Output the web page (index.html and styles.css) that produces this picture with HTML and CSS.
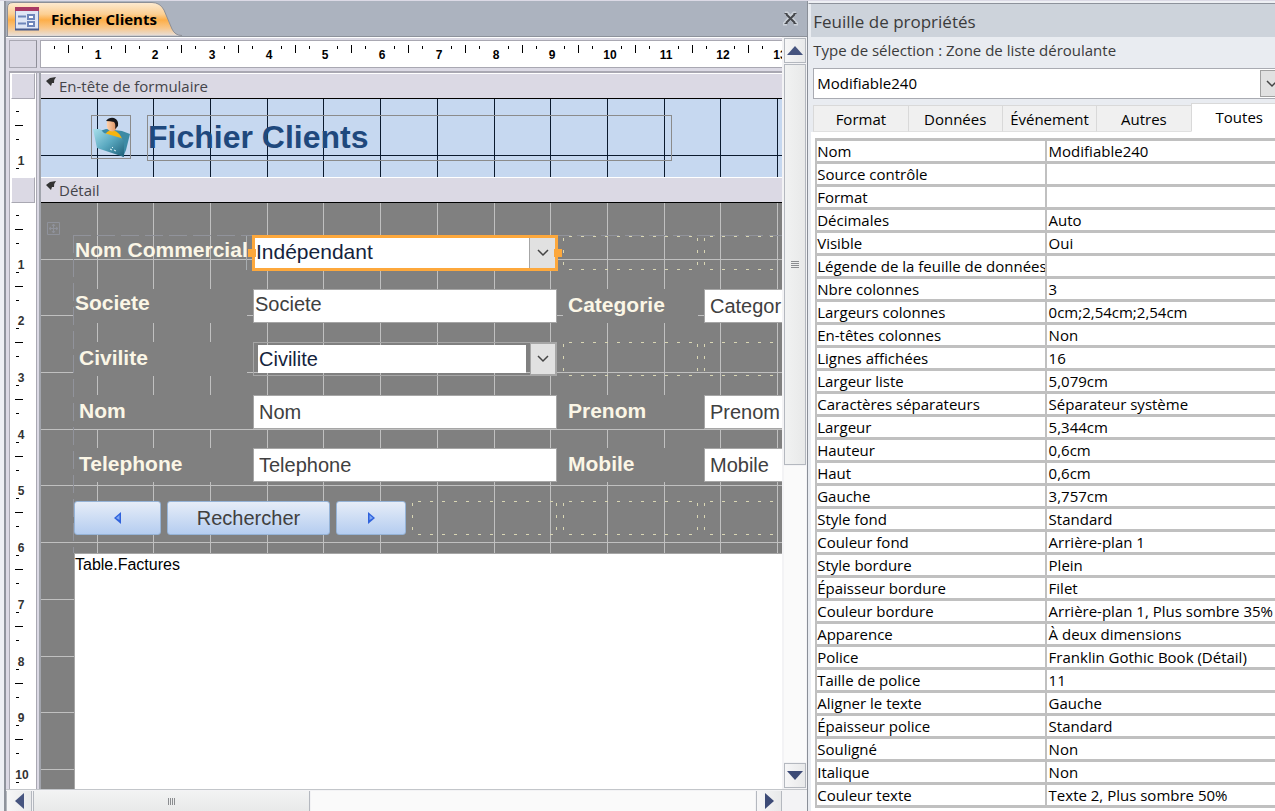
FILE: index.html
```html
<!DOCTYPE html>
<html lang="fr">
<head>
<meta charset="utf-8">
<title>Fichier Clients</title>
<link rel="stylesheet" href="styles.css">
</head>
<body>
<div class="app">
  <main class="doc">
    <div class="tabbar">
      <div class="doc-tab">
        <svg class="tab-shape" width="178" height="34" viewBox="0 0 178 34" aria-hidden="true">
          <defs><linearGradient id="tabfill" x1="0" y1="0" x2="0" y2="1">
            <stop offset="0" stop-color="#fdebd3"/><stop offset=".35" stop-color="#fccf92"/>
            <stop offset=".52" stop-color="#fdae48"/><stop offset=".75" stop-color="#f9c585"/><stop offset="1" stop-color="#e6dfdc"/>
          </linearGradient></defs>
          <path d="M.5 34V6Q.5.5 6 .5H145Q153 .5 157 8L165 27Q168 33.500 175 33.500" fill="url(#tabfill)" stroke="#8d8f96"/>
        </svg>
        <svg class="tab-icon" width="24" height="24" viewBox="0 0 24 24" aria-hidden="true">
          <rect x=".5" y=".5" width="23" height="22" fill="#dfe6f5" stroke="#6b7fae"/>
          <path d="M0 22.500H24" stroke="#475c90" stroke-width="2"/>
          <rect width="24" height="4" fill="#a93a64"/>
          <path d="M3 9.500h8M3 16.500h8" stroke="#6e86ba" stroke-width="2"/>
          <rect x="13" y="8" width="6" height="4" fill="#fff" stroke="#6e86ba" stroke-width="2"/>
          <rect x="13" y="15" width="6" height="4" fill="#fff" stroke="#6e86ba" stroke-width="2"/>
        </svg>
        <span class="tab-name">Fichier Clients</span>
      </div>
      <button class="close" aria-label="Fermer">
        <svg width="15" height="15" viewBox="0 0 15 15"><path d="M2 2.500h2l9 10h-2M13 2.500h-2l-9 10h2" fill="none" stroke="#ccd2da" stroke-width="4"/><path d="M3 3l9 9M12 3l-9 9" stroke="#45474c" stroke-width="2"/><path d="M1.500 2.500h3M10.500 2.500h3M1.500 12.500h3M10.500 12.500h3" stroke="#45474c"/></svg>
      </button>
    </div>

    <div class="workspace">
      <div class="designer">
        <div class="ruler-row">
          <div class="corner"></div>
          <div class="hruler">
            <svg class="ruler-svg" width="800" height="26" aria-hidden="true">
              <path class="tick" d="M13.500 5v3M41.500 5v3M70.500 5v3M98.500 5v3M126.500 5v3M154.500 5v3M183.500 5v3M211.500 5v3M240.500 5v3M268.500 5v3M296.500 5v3M324.500 5v3M353.500 5v3M381.500 5v3M410.500 5v3M438.500 5v3M467.500 5v3M495.500 5v3M523.500 5v3M551.500 5v3M580.500 5v3M608.500 5v3M637.500 5v3M665.500 5v3M693.500 5v3M721.500 5v3"/>
              <path class="tick" d="M27.500 4v8M84.500 4v8M140.500 4v8M197.500 4v8M254.500 4v8M310.500 4v8M367.500 4v8M424.500 4v8M481.500 4v8M537.500 4v8M594.500 4v8M651.500 4v8M707.500 4v8"/>
              <g class="num" text-anchor="middle">
                <text x="57" y="18">1</text><text x="114" y="18">2</text><text x="171" y="18">3</text><text x="228" y="18">4</text><text x="284" y="18">5</text><text x="341" y="18">6</text><text x="398" y="18">7</text><text x="455" y="18">8</text><text x="511" y="18">9</text><text x="569" y="18">10</text><text x="625" y="18">11</text><text x="682" y="18">12</text><text x="739" y="18">13</text>
              </g>
            </svg>
          </div>
        </div>

        <section class="section">
          <div class="gutter"><div class="selector"></div>
            <div class="vruler"><svg class="ruler-svg" width="26" height="74" aria-hidden="true">
              <path class="tick" d="M6 12.500h3M6 40.500h3M6 69.500h3M5 26.500h8"/>
              <g class="num vnum" text-anchor="middle"><text x="11" y="66">1</text></g>
            </svg></div>
          </div>
          <div class="band">
            <h2 class="band-title"><svg width="10" height="10" viewBox="0 0 10 10" aria-hidden="true"><path d="M0 4L4 1L10 0Q8 2 8 6L6 6L5 9Z" fill="#333"/></svg>En-tête de formulaire</h2>
            <div class="canvas head-canvas">
              <svg class="gridlines" width="100%" height="100%" aria-hidden="true"><path d="M56.500 0v900M112.500 0v900M169.500 0v900M226.500 0v900M282.500 0v900M339.500 0v900M396.500 0v900M453.500 0v900M509.500 0v900M566.500 0v900M623.500 0v900M679.500 0v900M736.500 0v900M0 56.500h1200"/></svg>
              <div class="logo-box">
                <svg width="38" height="42" viewBox="0 0 38 42" aria-hidden="true">
                  <defs>
                    <linearGradient id="fold" x1="0" y1="0" x2="1" y2="1"><stop offset="0" stop-color="#a9e0ec"/><stop offset=".5" stop-color="#5aa9c0"/><stop offset="1" stop-color="#1c5e78"/></linearGradient>
                    <linearGradient id="face" x1="0" y1="0" x2="1" y2="0"><stop offset="0" stop-color="#ffd2ac"/><stop offset="1" stop-color="#d98b5c"/></linearGradient>
                  </defs>
                  <path d="M8 15L14 13L30 15L38 18L34 34L31 41Z" fill="#3c8aa5"/>
                  <path d="M12 20Q15 14 21 14Q29 17 30 24Z" fill="#f6b40f"/>
                  <path d="M15 5Q14 13 18 15Q24 17 25 10V5Z" fill="url(#face)"/>
                  <path d="M14 5Q17 1 22 2Q27 4 26 10L23 13Q24 8 22 6Q18 5 14 5Z" fill="#16161a"/>
                  <path d="M1 13H8L12 17L29 22Q33 24 32 28L32 41L5 32Z" fill="url(#fold)"/>
                  <path d="M18 33l2 1M22 34l2 1M20 31l1 1" stroke="#dff4f8"/>
                </svg>
              </div>
              <h1 class="form-title">Fichier Clients</h1>
            </div>
          </div>
        </section>

        <section class="section grow">
          <div class="gutter"><div class="selector"></div>
            <div class="vruler"><svg class="ruler-svg" width="26" height="620" aria-hidden="true">
              <path class="tick" d="M6 12.500h3M6 40.500h3M6 69.500h3M6 97.500h3M6 125.500h3M6 153.500h3M6 182.500h3M6 210.500h3M6 239.500h3M6 267.500h3M6 295.500h3M6 323.500h3M6 352.500h3M6 380.500h3M6 409.500h3M6 437.500h3M6 466.500h3M6 494.500h3M6 522.500h3M6 550.500h3M6 579.500h3"/>
              <path class="tick" d="M5 26.500h8M5 83.500h8M5 139.500h8M5 196.500h8M5 253.500h8M5 309.500h8M5 366.500h8M5 423.500h8M5 480.500h8M5 536.500h8"/>
              <g class="num vnum" text-anchor="middle"><text x="11" y="66">1</text><text x="11" y="122">2</text><text x="11" y="179">3</text><text x="11" y="236">4</text><text x="11" y="292">5</text><text x="11" y="349">6</text><text x="11" y="406">7</text><text x="11" y="463">8</text><text x="11" y="519">9</text><text x="12" y="576">10</text></g>
            </svg></div>
          </div>
          <div class="band">
            <h2 class="band-title"><svg width="10" height="10" viewBox="0 0 10 10" aria-hidden="true"><path d="M0 4L4 1L10 0Q8 2 8 6L6 6L5 9Z" fill="#333"/></svg>Détail</h2>
            <div class="canvas detail-canvas">
              <svg class="gridlines" width="100%" height="100%" aria-hidden="true"><path d="M56.500 0v900M112.500 0v900M169.500 0v900M226.500 0v900M282.500 0v900M339.500 0v900M396.500 0v900M453.500 0v900M509.500 0v900M566.500 0v900M623.500 0v900M679.500 0v900M736.500 0v900M0 56.500h1200M0 112.500h1200M0 169.500h1200M0 226.500h1200M0 282.500h1200M0 339.500h1200M0 396.500h1200M0 453.500h1200M0 509.500h1200M0 566.500h1200"/></svg>
              <svg class="move" width="13" height="13" viewBox="0 0 13 13" aria-hidden="true"><path d="M.5.5h12v12H.5ZM6.500 2v9M2 6.500h9M5 4l1.500-2L8 4M5 9l1.500 2L8 9M4 5L2 6.500L4 8M9 5l2 1.500L9 8" fill="none" stroke="#8f929b"/></svg>
              <form class="stack">
                <label class="lbl clear tight" for="commercial">Nom Commercial</label>
                <div class="combo selected"><select id="commercial" class="combo-value tight big"><option>Indépendant</option></select><span class="drop"><svg width="12" height="8" viewBox="0 0 12 8"><path d="M1 1l5 5l5-5" fill="none" stroke="#444" stroke-width="1.500"/></svg></span></div>
                <span class="empty"></span><span class="empty"></span>

                <label class="lbl tight" for="societe">Societe</label>
                <input class="field tight" id="societe" value="Societe">
                <label class="lbl" for="categorie">Categorie</label>
                <input class="field" id="categorie" value="Categorie">

                <label class="lbl" for="civilite">Civilite</label>
                <div class="combo outlined"><select id="civilite" class="combo-value"><option>Civilite</option></select><span class="drop"><svg width="12" height="8" viewBox="0 0 12 8"><path d="M1 1l5 5l5-5" fill="none" stroke="#444" stroke-width="1.500"/></svg></span></div>
                <span class="empty"></span><span class="empty"></span>

                <label class="lbl" for="nom">Nom</label>
                <input class="field" id="nom" value="Nom">
                <label class="lbl" for="prenom">Prenom</label>
                <input class="field" id="prenom" value="Prenom">

                <label class="lbl" for="tel">Telephone</label>
                <input class="field" id="tel" value="Telephone">
                <label class="lbl" for="mobile">Mobile</label>
                <input class="field" id="mobile" value="Mobile">

                <div class="actions">
                  <button type="button" class="btn prev" aria-label="Précédent"><svg width="8" height="12" viewBox="0 0 8 12"><path d="M7 0V12L0 6Z" fill="#2f62dc"/><path d="M5.500 3V8L2 6Z" fill="#7fa8f5"/></svg></button>
                  <button type="button" class="btn search">Rechercher</button>
                  <button type="button" class="btn next" aria-label="Suivant"><svg width="8" height="12" viewBox="0 0 8 12"><path d="M1 0V12L8 6Z" fill="#2f62dc"/><path d="M2.500 3V8L6 6Z" fill="#7fa8f5"/></svg></button>
                  <span class="empty"></span>
                </div>
                <span class="empty"></span><span class="empty"></span>
              </form>
              <div class="subform">Table.Factures</div>
            </div>
          </div>
        </section>
      </div>

      <div class="vscroll">
        <button class="sbtn" aria-label="Haut"><svg width="16" height="9" viewBox="0 0 16 9"><path d="M0 9L8 0L16 9Z" fill="#46547f"/></svg></button>
        <div class="vthumb"><span></span></div>
        <div class="track"></div>
        <button class="sbtn" aria-label="Bas"><svg width="16" height="9" viewBox="0 0 16 9"><path d="M0 0H16L8 9Z" fill="#3c4a76"/></svg></button>
      </div>
    </div>

    <div class="hscroll">
      <button class="sbtn hbtn" aria-label="Gauche"><svg width="9" height="16" viewBox="0 0 9 16"><path d="M9 0V16L0 8Z" fill="#46547f"/></svg></button>
      <div class="hthumb"><span></span></div>
      <div class="track"></div>
      <button class="sbtn hbtn" aria-label="Droite"><svg width="9" height="16" viewBox="0 0 9 16"><path d="M0 0V16L9 8Z" fill="#3c4a76"/></svg></button>
    </div>
  </main>

  <aside class="props">
    <h2 class="props-title">Feuille de propriétés</h2>
    <label class="props-type" for="control">Type de sélection : Zone de liste déroulante</label>
    <div class="props-combo"><select id="control" class="props-select"><option>Modifiable240</option></select><span class="props-drop"><svg width="12" height="8" viewBox="0 0 12 8"><path d="M1 1l5 5l5-5" fill="none" stroke="#444" stroke-width="1.500"/></svg></span></div>
    <div class="tabs" role="tablist">
      <button class="tab" role="tab">Format</button>
      <button class="tab" role="tab">Données</button>
      <button class="tab" role="tab">Événement</button>
      <button class="tab" role="tab">Autres</button>
      <button class="tab active" role="tab">Toutes</button>
    </div>
    <div class="sheet">
      <table class="grid">
        <tr><th>Nom</th><td>Modifiable240</td></tr>
        <tr><th>Source contrôle</th><td></td></tr>
        <tr><th>Format</th><td></td></tr>
        <tr><th>Décimales</th><td>Auto</td></tr>
        <tr><th>Visible</th><td>Oui</td></tr>
        <tr><th>Légende de la feuille de données</th><td></td></tr>
        <tr><th>Nbre colonnes</th><td>3</td></tr>
        <tr><th>Largeurs colonnes</th><td>0cm;2,54cm;2,54cm</td></tr>
        <tr><th>En-têtes colonnes</th><td>Non</td></tr>
        <tr><th>Lignes affichées</th><td>16</td></tr>
        <tr><th>Largeur liste</th><td>5,079cm</td></tr>
        <tr><th>Caractères séparateurs</th><td>Séparateur système</td></tr>
        <tr><th>Largeur</th><td>5,344cm</td></tr>
        <tr><th>Hauteur</th><td>0,6cm</td></tr>
        <tr><th>Haut</th><td>0,6cm</td></tr>
        <tr><th>Gauche</th><td>3,757cm</td></tr>
        <tr><th>Style fond</th><td>Standard</td></tr>
        <tr><th>Couleur fond</th><td>Arrière-plan 1</td></tr>
        <tr><th>Style bordure</th><td>Plein</td></tr>
        <tr><th>Épaisseur bordure</th><td>Filet</td></tr>
        <tr><th>Couleur bordure</th><td>Arrière-plan 1, Plus sombre 35%</td></tr>
        <tr><th>Apparence</th><td>À deux dimensions</td></tr>
        <tr><th>Police</th><td>Franklin Gothic Book (Détail)</td></tr>
        <tr><th>Taille de police</th><td>11</td></tr>
        <tr><th>Aligner le texte</th><td>Gauche</td></tr>
        <tr><th>Épaisseur police</th><td>Standard</td></tr>
        <tr><th>Souligné</th><td>Non</td></tr>
        <tr><th>Italique</th><td>Non</td></tr>
        <tr><th>Couleur texte</th><td>Texte 2, Plus sombre 50%</td></tr>
      </table>
    </div>
  </aside>
</div>
</body>
</html>
```
FILE: styles.css
```css
* { box-sizing: border-box; }
body { margin: 0; font-family: "Open Sans", "Noto Sans", sans-serif; font-size: 15px; color: #000; background: #eef0f4; }
button, input, select { font: inherit; color: inherit; margin: 0; border-radius: 0; }
h1, h2 { margin: 0; font-weight: 400; }
svg { display: block; flex: none; }
.app { display: flex; height: 100vh; overflow: hidden; padding-left: 4px; border-top: 1px solid #dcdae6; }

/* document pane */
.doc { flex: 805 1 0; min-width: 0; display: flex; flex-direction: column; border-left: 2px solid #8f939c; border-right: 1px solid #8a8f98; background: #dbd9e4; }
.tabbar { flex: none; height: 36px; display: flex; justify-content: space-between; align-items: center; background: #acb3bf; border-bottom: 1px solid #8d929b; padding-right: 9px; }
.doc-tab { position: relative; height: 35px; display: flex; align-items: center; gap: 12px; padding-left: 9px; }
.tab-shape { position: absolute; left: 1px; bottom: 0; }
.tab-icon, .tab-name { position: relative; }
.tab-name { font-weight: 700; }
.close { border: 0; padding: 0; background: none; }
.workspace { flex: 1; min-height: 0; display: flex; }
.designer { flex: 1; min-width: 0; display: flex; flex-direction: column; border-top: 1px solid #fff; padding-left: 3px; }
.ruler-row { flex: none; display: flex; gap: 3px; padding: 2px 0 3px; border-bottom: 2px solid #a9a8b2; }
.corner { flex: none; width: 28px; border: 1px solid #a9a8b2; border-right-color: #8f8f99; }
.hruler { flex: 1; min-width: 0; overflow: hidden; height: 28px; background: #fff; border: 1px solid #a9a8b2; border-width: 1px 0 1px 1px; }
.tick { stroke: #000; fill: none; shape-rendering: crispEdges; }
.num { font-family: "Liberation Sans", Arial, sans-serif; font-weight: 700; font-size: 12px; }
.vnum { fill: #333; }
.section { flex: none; display: flex; min-height: 0; }
.grow { flex: 1; }
.gutter { flex: none; width: 28px; display: flex; flex-direction: column; background: #fff; border: solid #a9a8b2; border-width: 0 1px; overflow: hidden; }
.selector { flex: none; height: 26px; margin: 0 1px; background: #dbd9e4; border: 1px solid #a9a8b2; border-top-color: #fff; border-left-color: #fff; }
.vruler { flex: 1; min-height: 0; overflow: hidden; }
.band { flex: 1; min-width: 0; display: flex; flex-direction: column; margin-left: 2px; border-left: 2px solid #a1a4ac; }
.band-title { flex: none; height: 26px; display: flex; align-items: center; gap: 3px; padding-left: 5px; font-size: 15px; line-height: 20px; color: #44444a; border-top: 1px solid #fff; border-bottom: 1px solid #000; }
.band-title svg { align-self: flex-start; margin-top: 3px; }
.canvas { position: relative; overflow: hidden; }
.gridlines { position: absolute; left: 0; top: 0; shape-rendering: crispEdges; fill: none; }
.head-canvas { height: 78px; display: flex; align-items: flex-start; gap: 16px; padding: 16px 0 0 50px; background: #c6d8f0; }
.head-canvas .gridlines { stroke: #0b1a2e; }
.logo-box { position: relative; border: 1px solid #8b8b8b; }
.form-title { position: relative; width: 525px; height: 46px; border: 1px solid #8b8b8b; font: 700 32px/42px "Liberation Sans", Arial, sans-serif; color: #1f497d; }
.detail-canvas { flex: 1; display: flex; flex-direction: column; padding: 32px 0 0 32px; background: #808080; }
.detail-canvas .gridlines { stroke: #c0c0c0; }
.move { position: absolute; left: 6px; top: 19px; }

/* form layout grid */
.stack { position: relative; flex: none; display: grid; grid-template-columns: 173px 304px 135px 304px; grid-auto-rows: 34px; gap: 19px 6px; padding: 1px 0 18px 1px; font-family: "Liberation Sans", Arial, sans-serif; font-size: 20px;
  background: repeating-linear-gradient(90deg, #91939b 0 18px, transparent 18px 24px) 0 0 / 100% 1px no-repeat, repeating-linear-gradient(180deg, #91939b 0 18px, transparent 18px 24px) 0 0 / 1px 100% no-repeat; }
.lbl { background: #808080; color: #fbf6e6; font-weight: 700; font-size: 21px; line-height: 32px; padding-left: 5px; white-space: nowrap; }
.lbl.clear { background: none; border-right: 1px solid #a8adb0; }
.lbl.tight { padding-left: 1px; line-height: 28px; }
.field { width: 100%; height: 34px; border: 1px solid #a6a6a6; background: #fff; color: #404040; padding: 0 5px; line-height: 32px; }
.tight { padding-left: 1px; padding-bottom: 4px; }
.combo { position: relative; display: flex; }
.combo-value { flex: 1; min-width: 0; border: 0; appearance: none; background: #fff; color: #14233c; }
.big { font-size: 21px; }
.drop { flex: none; width: 26px; display: flex; align-items: center; justify-content: center; background: #e1e1e1; border-left: 1px solid #a6a6a6; }
.selected { margin: -1px; background: #fff; border: 3px solid #fda83c; }
.selected::before, .selected::after { content: ""; position: absolute; top: 11px; width: 8px; height: 8px; background: #fda83c; }
.selected::before { left: -7px; }
.selected::after { right: -7px; }
.outlined { border: 1px solid #a6a6a6; }
.outlined .combo-value { margin: 2px 4px; padding: 0 1px; }
.outlined .drop { border: 1px solid #a6a6a6; }
.empty { background:
  repeating-linear-gradient(90deg, transparent 0 6px, #d9d6b4 6px 9px, transparent 9px 12px) 0 0 / 100% 1px no-repeat,
  repeating-linear-gradient(90deg, transparent 0 6px, #d9d6b4 6px 9px, transparent 9px 12px) 0 100% / 100% 1px no-repeat,
  repeating-linear-gradient(180deg, transparent 0 2px, #d9d6b4 2px 5px, transparent 5px 12px) 0 0 / 1px 100% no-repeat,
  repeating-linear-gradient(180deg, transparent 0 2px, #d9d6b4 2px 5px, transparent 5px 12px) 100% 0 / 1px 100% no-repeat; }
.actions { grid-column: span 2; display: grid; grid-template-columns: 87px 163px 70px 1fr; gap: 6px; }
.btn { display: flex; align-items: center; justify-content: center; border: 1px solid #95b3d7; border-radius: 3px; background: linear-gradient(#e6edf8, #b5cdf0); color: #404040; padding: 0; }
.subform { position: relative; flex: 1; background: #fff; border: solid #a6a6a6; border-width: 1px 0 0 1px; margin-left: 1px; font: 16px/22px "Liberation Sans", Arial, sans-serif; }

/* scrollbars */
.vscroll { flex: none; width: 25px; display: flex; flex-direction: column; gap: 1px; padding: 1px 1px 1px 2px; background: #f3f3f5; }
.sbtn { flex: none; height: 25px; padding: 0; display: flex; align-items: center; justify-content: center; border: 1px solid #b4b8bf; background: linear-gradient(90deg, #f6f6f7, #e8e9ea); }
.vthumb { flex: 402 1 0; display: flex; align-items: center; justify-content: center; border: 1px solid #b4b8bf; background: linear-gradient(90deg, #f1f2f2, #e8e9e9); }
.vthumb span { width: 8px; height: 7px; background: repeating-linear-gradient(#8b8d90 0 1px, transparent 1px 2px); }
.track { flex: 298 1 0; background: #fafafa; }
.hscroll { flex: none; height: 22px; display: flex; gap: 1px; padding: 1px 25px 0 0; border-top: 1px solid #c3c6ca; background: #f3f3f5; }
.hbtn { width: 26px; height: auto; border-bottom: 0; border-top: 0; }
.hthumb { flex: 276 1 0; display: flex; align-items: center; justify-content: center; border: 1px solid #b4b8bf; border-width: 0 1px; background: linear-gradient(#f2f3f3, #e8e9e9); }
.hthumb span { width: 7px; height: 7px; background: repeating-linear-gradient(90deg, #8b8d90 0 1px, transparent 1px 2px); }
.hscroll .track { flex-grow: 447; }

/* property sheet */
.props { flex: 466 1 0; min-width: 0; display: flex; flex-direction: column; margin-top: 2px; padding-left: 2px; border-left: 1px solid #e9ecf1; border-top: 1px solid #8d929b; background: #e9ecf1; }
.props-title { flex: none; height: 33px; padding-left: 2px; background: #cdd3db; font-size: 17px; line-height: 36px; color: #3b3b3b; }
.props-type { flex: none; padding-left: 2px; line-height: 26px; height: 31px; color: #3b3b3b; white-space: nowrap; }
.props-combo { flex: none; margin-left: 2px; height: 31px; display: flex; align-items: stretch; border: 1px solid #a9abb2; border-right: 0; background: #fff; overflow: hidden; }
.props-select { flex: 1; min-width: 0; border: 0; appearance: none; background: #fff; padding: 0 3px 2px; }
.props-drop { flex: none; display: flex; align-items: center; width: 15px; margin: 1px 0; padding-left: 5px; overflow: hidden; background: #e1e1e1; border: 1px solid #a0a0a0; border-right: 0; }
.tabs { flex: none; display: flex; align-items: flex-end; margin-top: 4px; padding-left: 2px; }
.tab { flex: 94 1 0; height: 27px; padding: 0; background: #f0f0f0; border: 1px solid #d9d9d9; border-right: 0; border-bottom-color: #e0e0e0; }
.tab.active { flex-grow: 72; height: 29px; padding: 0 0 2px 12px; background: #fff; border-color: #d9d9d9; border-bottom-color: #fff; }
.sheet { flex: 1; min-height: 0; overflow: hidden; background: #fff; padding: 6px 0 0 4px; }
.grid { width: 100%; border-collapse: collapse; table-layout: fixed; }
.grid th, .grid td { height: 23px; padding: 0; line-height: 20px; font-weight: 400; text-align: left; white-space: nowrap; overflow: hidden; border: solid #c0c0c0; border-width: 3px 0 3px 2px; }
.grid th { width: 50%; }
.grid td { padding-left: 2px; }
```
